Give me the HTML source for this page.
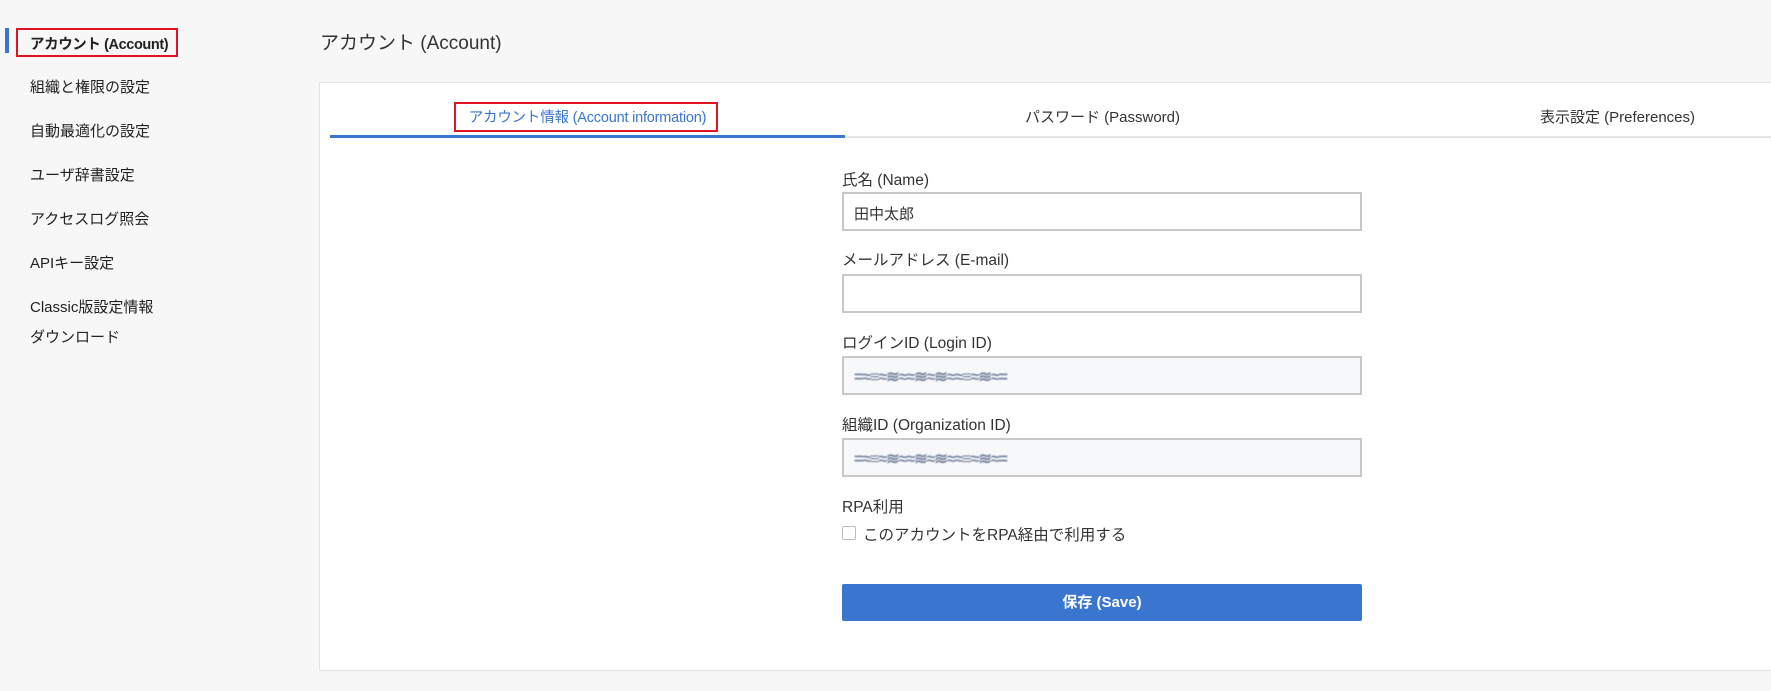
<!DOCTYPE html>
<html><head><meta charset="utf-8"><style>
*{box-sizing:border-box;margin:0;padding:0}
body{width:1771px;height:691px;background:#f7f7f7;font-family:"Liberation Sans","Noto Sans CJK JP",sans-serif;color:#333;position:relative;overflow:hidden}
.a{position:absolute}
.nav{left:30px;font-size:15px;color:#222}
.card{left:319px;top:82px;width:1500px;height:589px;background:#fff;border:1px solid #e3e3e3}
.tab{top:106px;width:515px;text-align:center;font-size:15px;color:#333}
.lbl{left:842px;font-size:15.5px;color:#333}
.inp{left:842px;width:520px;height:39px;border:2px solid #c8c8c8;background:#fff;font-size:15px;padding:9px 10px}
.ro{background:#f6f8fa}
.blur{color:#7a86a0;filter:blur(0.5px);letter-spacing:-1px;font-size:16px;font-weight:bold}
</style></head><body>
<div class="a" style="left:5px;top:28px;width:4px;height:25px;background:#3a75d0"></div>
<div class="a" style="left:16px;top:28px;width:162px;height:29px;border:2px solid #e0141e"></div>
<div class="a nav" style="top:33px;font-weight:bold;font-size:14.5px;letter-spacing:-0.4px">アカウント (Account)</div>
<div class="a nav" style="top:76px">組織と権限の設定</div>
<div class="a nav" style="top:120px">自動最適化の設定</div>
<div class="a nav" style="top:164px">ユーザ辞書設定</div>
<div class="a nav" style="top:208px">アクセスログ照会</div>
<div class="a nav" style="top:252px">APIキー設定</div>
<div class="a nav" style="top:296px">Classic版設定情報</div>
<div class="a nav" style="top:326px">ダウンロード</div>
<div class="a" style="left:320px;top:28px;font-size:19px;color:#333">アカウント (Account)</div>
<div class="a card"></div>
<div class="a" style="left:330px;top:136px;width:1441px;height:2px;background:#e4e4e4"></div>
<div class="a" style="left:330px;top:135px;width:515px;height:3px;background:#3a75d0"></div>
<div class="a" style="left:454px;top:102px;width:264px;height:30px;border:2px solid #e0141e"></div>
<div class="a tab" style="left:330px;color:#3a75d0;font-size:14.5px;letter-spacing:-0.2px">アカウント情報 (Account information)</div>
<div class="a tab" style="left:845px">パスワード (Password)</div>
<div class="a tab" style="left:1360px">表示設定 (Preferences)</div>
<div class="a lbl" style="top:168px">氏名 (Name)</div>
<div class="a inp" style="top:192px">田中太郎</div>
<div class="a lbl" style="top:248px">メールアドレス (E-mail)</div>
<div class="a inp" style="top:274px"></div>
<div class="a lbl" style="top:331px">ログインID (Login ID)</div>
<div class="a inp ro" style="top:356px"><span class="blur">=≈≡≈≋≈≈≋≈≋≈≈≡≈≋≈=</span></div>
<div class="a lbl" style="top:413px">組織ID (Organization ID)</div>
<div class="a inp ro" style="top:438px"><span class="blur">=≈≡≈≋≈≈≋≈≋≈≈≡≈≋≈=</span></div>
<div class="a lbl" style="top:495px">RPA利用</div>
<div class="a" style="left:842px;top:526px;width:14px;height:14px;border:1px solid #bbb;border-radius:2px;background:#fff"></div>
<div class="a" style="left:863px;top:523px;font-size:15.5px">このアカウントをRPA経由で利用する</div>
<div class="a" style="left:842px;top:584px;width:520px;height:37px;background:#3a75d0;border-radius:2px;color:#fff;font-weight:bold;font-size:15px;text-align:center;line-height:37px">保存 (Save)</div>
</body></html>
